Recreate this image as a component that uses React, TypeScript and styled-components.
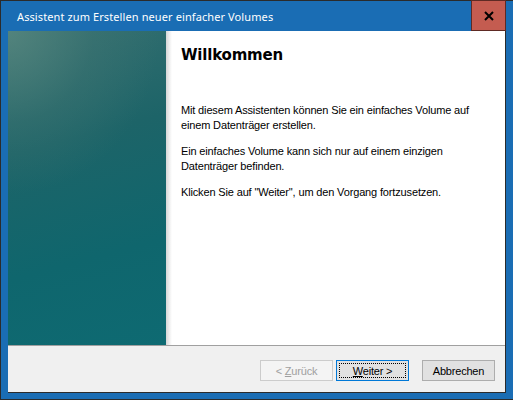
import styled, { createGlobalStyle } from "styled-components";

const GlobalStyle = createGlobalStyle`
  html, body {
    margin: 0;
    padding: 0;
    background: #ffffff;
  }
`;

const Window = styled.div`
  width: 513px;
  height: 400px;
  box-sizing: border-box;
  background: #1a6db4;
  border-top: 1px solid #2b2b2b;
  border-left: 1px solid #2b2b2b;
  border-bottom: 1px solid #2b2b2b;
  display: flex;
  flex-direction: column;
  font-family: "Liberation Sans", Arial, sans-serif;
`;

const TitleBar = styled.div`
  height: 30px;
  display: flex;
  align-items: center;
  justify-content: space-between;
  padding-left: 16px;
`;

const Title = styled.span`
  color: #ffffff;
  font-family: "Noto Sans", "Open Sans", sans-serif;
  font-size: 11px;
  letter-spacing: 0.1px;
`;

const CloseButton = styled.button`
  width: 35px;
  height: 31px;
  margin-top: -1px;
  margin-right: 7px;
  box-sizing: border-box;
  border: 1px solid #5e2a24;
  background: #c45c50;
  padding: 0;
  display: flex;
  align-items: center;
  justify-content: center;
`;

const Frame = styled.div`
  margin-left: 7px;
  margin-right: 7px;
  height: 362px;
  box-sizing: border-box;
  border-right: 1px solid #2b2b2b;
  border-bottom: 1px solid #2b2b2b;
  display: flex;
  flex-direction: column;
  background: #ffffff;
`;

const Main = styled.div`
  height: 314px;
  display: flex;
  border-bottom: 1px solid #a0a0a0;
`;

const SidePanel = styled.div`
  width: 158px;
  flex-shrink: 0;
  background:
    radial-gradient(ellipse 120% 65% at 0% 0%, rgba(95, 140, 130, 0.7) 0%, rgba(70, 120, 115, 0.35) 45%, rgba(0, 0, 0, 0) 80%),
    linear-gradient(165deg, #356f70 0%, #1d6468 35%, #0f666d 70%, #0e6a72 100%);
`;

const Shade = styled.div`
  width: 6px;
  flex-shrink: 0;
  background: linear-gradient(90deg, #d6d6d6 0%, #ececec 50%, #ffffff 100%);
`;

const Content = styled.div`
  flex: 1;
  padding: 14px 12px 0 9px;
  color: #000000;
`;

const Heading = styled.h1`
  margin: 0 0 38px;
  font-family: "DejaVu Sans", Verdana, sans-serif;
  font-weight: bold;
  font-size: 15px;
  line-height: 20px;
  letter-spacing: -0.2px;
`;

const Paragraph = styled.p`
  margin: 0 0 11px;
  font-size: 11px;
  line-height: 15px;
  font-family: "Liberation Sans", Arial, sans-serif;
  letter-spacing: -0.15px;
`;

const Footer = styled.div`
  height: 46px;
  background: #f0f0f0;
  display: flex;
  justify-content: flex-end;
  align-items: flex-start;
  padding: 14px 10px 0 0;
  box-sizing: border-box;
`;

const Button = styled.button<{ $variant?: "disabled" | "default" | "normal"; $gap?: number }>`
  width: 73px;
  height: 21px;
  box-sizing: border-box;
  margin-left: ${(p) => p.$gap ?? 0}px;
  font-family: "Liberation Sans", Arial, sans-serif;
  font-size: 11px;
  letter-spacing: -0.2px;
  padding: 0;
  position: relative;
  border: 1px solid
    ${(p) => (p.$variant === "disabled" ? "#cccccc" : p.$variant === "default" ? "#0078d7" : "#adadad")};
  background: ${(p) => (p.$variant === "disabled" ? "#f4f4f4" : "#e1e1e1")};
  color: ${(p) => (p.$variant === "disabled" ? "#a0a0a0" : "#000000")};

  u {
    text-decoration: underline;
    text-underline-offset: 1px;
  }
`;

const FocusRing = styled.span`
  position: absolute;
  inset: 2px;
  border: 1px dotted #000000;
  pointer-events: none;
`;

export default function App() {
  return (
    <>
      <GlobalStyle />
      <Window>
        <TitleBar>
          <Title>Assistent zum Erstellen neuer einfacher Volumes</Title>
          <CloseButton aria-label="Schließen">
            <svg width="10" height="10" viewBox="0 0 10 10">
              <path d="M1 1 L9 9 M9 1 L1 9" stroke="#000" strokeWidth="2" />
            </svg>
          </CloseButton>
        </TitleBar>
        <Frame>
          <Main>
            <SidePanel />
            <Shade />
            <Content>
              <Heading>Willkommen</Heading>
              <Paragraph>
                Mit diesem Assistenten können Sie ein einfaches Volume auf
                <br />
                einem Datenträger erstellen.
              </Paragraph>
              <Paragraph>
                Ein einfaches Volume kann sich nur auf einem einzigen
                <br />
                Datenträger befinden.
              </Paragraph>
              <Paragraph>Klicken Sie auf "Weiter", um den Vorgang fortzusetzen.</Paragraph>
            </Content>
          </Main>
          <Footer>
            <Button $variant="disabled" disabled>
              &lt; <u>Z</u>urück
            </Button>
            <Button $variant="default" $gap={3}>
              <FocusRing />
              <u>W</u>eiter &gt;
            </Button>
            <Button $variant="normal" $gap={13}>
              Abbrechen
            </Button>
          </Footer>
        </Frame>
      </Window>
    </>
  );
}
